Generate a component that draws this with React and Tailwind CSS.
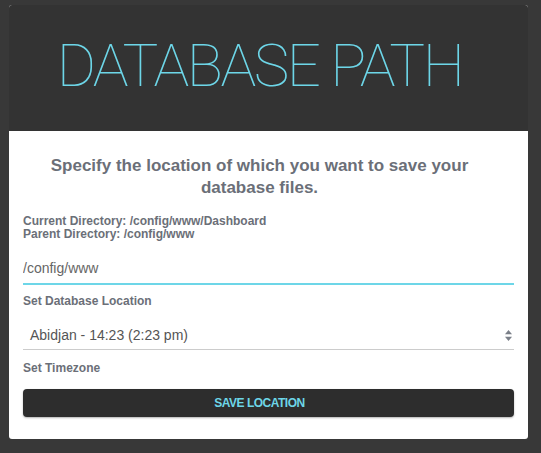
import React, { useState } from "react";

const App = () => {
  const [path, setPath] = useState("/config/www");

  return (
    <div className="min-h-[453px] bg-[#383838] pt-[5px] pl-[9px]" style={{ fontFamily: '"Liberation Sans", Arial, sans-serif' }}>
      <div className="w-[519px] rounded-[3px] overflow-hidden bg-white">
        <div className="bg-[#333333] h-[126px] flex items-center justify-center">
          <h1
            className="text-[#6dd6e8] text-[60px] leading-none font-thin tracking-[-2.5px] pb-[5px] mr-[18px]"
            style={{ fontFamily: 'Roboto, "Open Sans", sans-serif' }}
          >
            DATABASE PATH
          </h1>
        </div>

        <div className="px-[14px] pt-[24px] pb-[22px] text-[#6b6f78]">
          <h2 className="text-center font-bold text-[17px] leading-[22px] pl-[12px] pr-[30px]">
            Specify the location of which you want to save your database files.
          </h2>

          <div className="mt-[16px] text-[12px] leading-[13px] font-bold">
            <div>Current Directory: /config/www/Dashboard</div>
            <div>Parent Directory: /config/www</div>
          </div>

          <input
            className="mt-[12px] w-full h-[32px] border-b-2 border-[#6dd6e8] text-[14px] text-[#666] outline-none"
            value={path}
            onChange={(e) => setPath(e.target.value)}
          />

          <label className="block mt-[7px] text-[12px] font-bold">Set Database Location</label>

          <div className="relative mt-[12px] border-b border-[#cccccc] h-[28px] flex items-center pl-[7px]">
            <span className="text-[14px] text-[#555]">Abidjan - 14:23 (2:23 pm)</span>
            <svg className="absolute right-[2px] top-[8px]" width="7" height="11" viewBox="0 0 7 11">
              <path d="M3.5 0 L7 4.3 L0 4.3 Z" fill="#7a7f88" />
              <path d="M3.5 11 L7 6.7 L0 6.7 Z" fill="#7a7f88" />
            </svg>
          </div>

          <label className="block mt-[9px] text-[12px] font-bold">Set Timezone</label>

          <button className="mt-[12px] w-full h-[28px] pr-[18px] bg-[#2d2d2d] rounded-[4px] shadow-[0_1px_2px_rgba(0,0,0,0.3)] text-[#6dd6e8] text-[12px] font-bold tracking-[-0.5px]">
            SAVE LOCATION
          </button>
        </div>
      </div>
    </div>
  );
};

export default App;
